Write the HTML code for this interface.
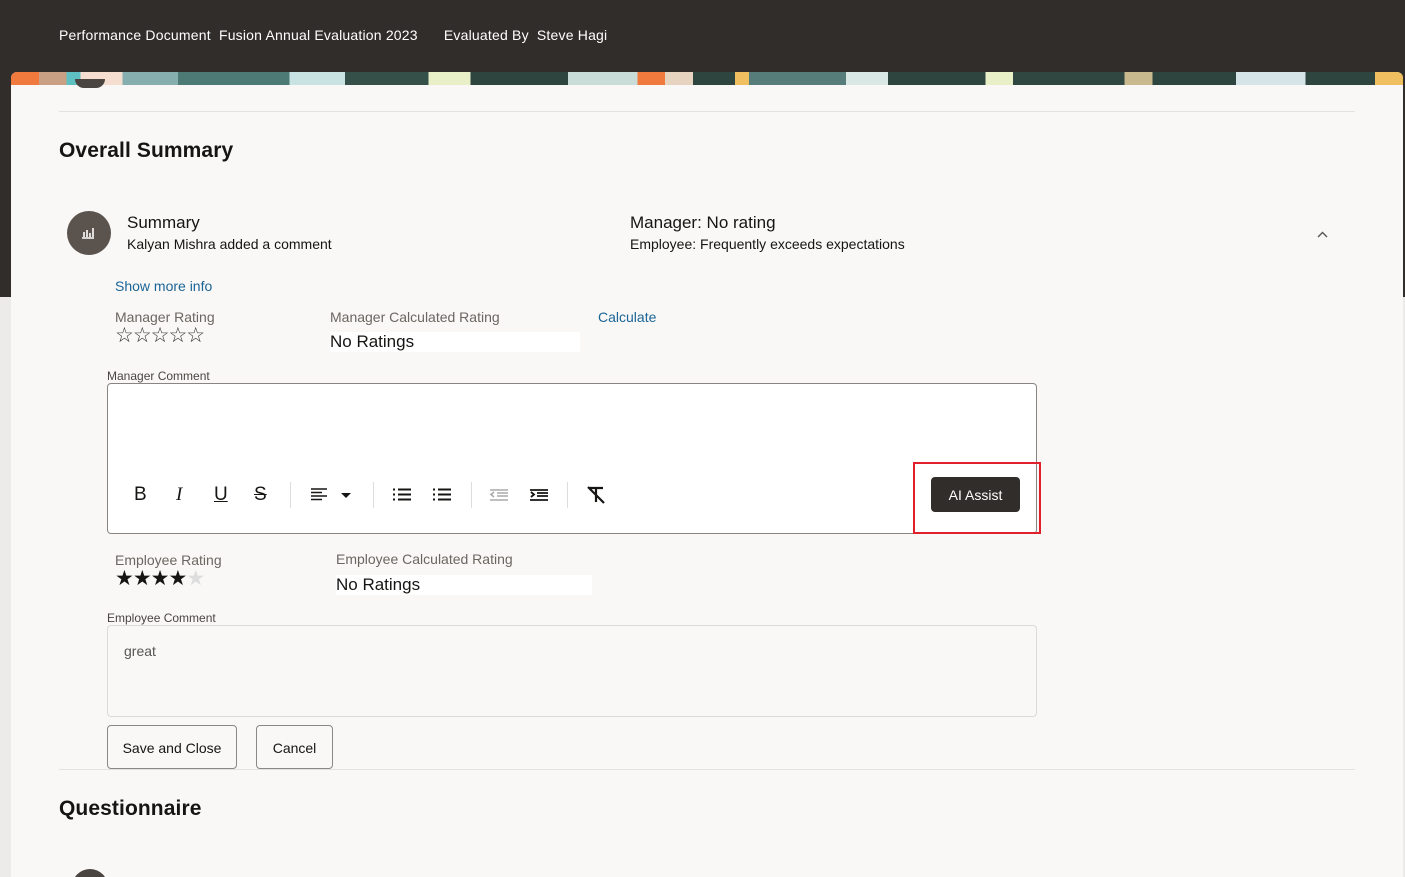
<!DOCTYPE html>
<html><head><meta charset="utf-8"><style>
*{box-sizing:border-box;margin:0;padding:0}
html,body{width:1405px;height:877px;overflow:hidden}
body{background:#ecebe9;font-family:"Liberation Sans",sans-serif;color:#161513;position:relative}
.top{position:absolute;left:0;top:0;width:1405px;height:297px;background:#312d2a}
.hdr{position:absolute;left:59px;top:27px;color:#fff;font-size:14px;letter-spacing:0.2px}
.hdr b{font-weight:normal;margin-left:4px}
.panel{position:absolute;left:11px;top:72px;width:1392px;height:805px;background:#f9f8f6;border-radius:6px 6px 0 0;overflow:hidden}
.banner{height:13px;background:linear-gradient(90deg,#f07a3e 0 2%,#c9a084 2% 4%,#5ec0c0 4% 5%,#f5ddd0 5% 8%,#87aeae 8% 12%,#4e7a76 12% 20%,#c8e3e1 20% 24%,#355049 24% 30%,#e9f0c8 30% 33%,#2d443f 33% 40%,#c9dcd8 40% 45%,#f07a3e 45% 47%,#e7d4c0 47% 49%,#2d443f 49% 52%,#f0c060 52% 53%,#567d7a 53% 60%,#d9e8e5 60% 63%,#2d443f 63% 70%,#e9f0c8 70% 72%,#2f4641 72% 80%,#c9b98e 80% 82%,#2d443f 82% 88%,#d5e4e6 88% 93%,#2d443f 93% 98%,#f0c060 98%)}
.wrap{position:absolute;left:0;top:0;width:1405px;height:877px;overflow:hidden}
.abs{position:absolute}
.line{position:absolute;width:1296px;height:1px;background:#e4e2df}
h2{position:absolute;font-size:21px;font-weight:bold;letter-spacing:0.1px}
.lbl{color:#6b6661;font-size:14px}
.small{font-size:12px;color:#4a4541}
.link{color:#1a6497;font-size:14px}
.btn{position:absolute;border:1px solid #888;border-radius:4px;background:#f9f8f6;font-size:14px;text-align:center}
.ic{position:absolute;top:485px}
.sep{position:absolute;top:482px;width:1px;height:26px;background:#ddd}
.stars{position:absolute;font-size:21px;letter-spacing:-1px;line-height:24px}
</style></head><body>
<div class="top"></div>
<div class="hdr">Performance Document <b>Fusion Annual Evaluation 2023</b> <span style="margin-left:22px">Evaluated By</span> <b>Steve Hagi</b></div>
<div class="panel">
<div class="banner"></div>
<div class="abs" style="left:64px;top:7px;width:30px;height:9px;border-radius:0 0 15px 15px;background:#4a4541"></div>
</div>
<div class="wrap">
<div class="line" style="left:59px;top:111px"></div>
<h2 style="left:59px;top:139px">Overall Summary</h2>
<div class="abs" style="left:67px;top:211px;width:44px;height:44px;border-radius:50%;background:#5a534e"></div>
<svg class="abs" style="left:81px;top:226px" width="14" height="13" viewBox="0 0 14 13"><path d="M1 12h12M3 11V6M6 11V4M9 11V7M12 11V2" stroke="#fff" stroke-width="1.6" fill="none"/></svg>
<div class="abs" style="left:127px;top:213px;font-size:17px">Summary</div>
<div class="abs" style="left:127px;top:236px;font-size:14px">Kalyan Mishra added a comment</div>
<div class="abs" style="left:630px;top:213px;font-size:17px">Manager: No rating</div>
<div class="abs" style="left:630px;top:236px;font-size:14px">Employee: Frequently exceeds expectations</div>
<svg class="abs" style="left:1317px;top:231px" width="11" height="7" viewBox="0 0 11 7"><path d="M1 6l4.5-4.5L10 6" stroke="#555" stroke-width="1.4" fill="none"/></svg>
<div class="abs link" style="left:115px;top:278px">Show more info</div>
<div class="abs lbl" style="left:115px;top:309px">Manager Rating</div>
<div class="stars" style="left:115px;top:324px;color:#333">☆☆☆☆☆</div>
<div class="abs lbl" style="left:330px;top:309px">Manager Calculated Rating</div>
<div class="abs" style="left:330px;top:332px;width:250px;height:20px;background:#fff;font-size:17px">No Ratings</div>
<div class="abs link" style="left:598px;top:309px">Calculate</div>
<div class="abs small" style="left:107px;top:369px">Manager Comment</div>
<div class="abs" style="left:107px;top:383px;width:930px;height:151px;background:#fff;border:1px solid #8a8580;border-radius:4px"></div>
<div class="ic" style="left:134px;top:484px;font-size:19px">B</div>
<div class="ic" style="left:176px;top:484px;font-size:19px;font-style:italic;font-family:'Liberation Serif',serif">I</div>
<div class="ic" style="left:214px;top:484px;font-size:19px;text-decoration:underline">U</div>
<div class="ic" style="left:254px;top:484px;font-size:19px;text-decoration:line-through">S</div>
<div class="sep" style="left:290px"></div>
<svg class="ic" style="left:311px;top:488px" width="42" height="14" viewBox="0 0 42 14"><path d="M0 1h16M0 4.5h11M0 8h16M0 11.5h11" stroke="#161513" stroke-width="1.6"/><path d="M30 5h10l-5 5z" fill="#161513"/></svg>
<div class="sep" style="left:373px"></div>
<svg class="ic" style="left:393px;top:488px" width="18" height="13" viewBox="0 0 18 13"><path d="M0 1.5h2M5 1.5h13M0 6.5h2M5 6.5h13M0 11.5h2M5 11.5h13" stroke="#161513" stroke-width="2"/></svg>
<svg class="ic" style="left:433px;top:488px" width="18" height="13" viewBox="0 0 18 13"><path d="M0 1.5h2M5 1.5h13M0 6.5h2M5 6.5h13M0 11.5h2M5 11.5h13" stroke="#161513" stroke-width="2"/></svg>
<div class="sep" style="left:471px"></div>
<svg class="ic" style="left:490px;top:489px" width="18" height="12" viewBox="0 0 18 12"><path d="M0 1h18M7 4h11M7 7h11M0 11h18M4 3L1 5.5 4 8" stroke="#aaa" stroke-width="1.6" fill="none"/></svg>
<svg class="ic" style="left:530px;top:489px" width="18" height="12" viewBox="0 0 18 12"><path d="M0 1h18M7 4h11M7 7h11M0 11h18M1 3l3 2.5L1 8" stroke="#161513" stroke-width="1.8" fill="none"/></svg>
<div class="sep" style="left:567px"></div>
<svg class="ic" style="left:586px;top:486px" width="20" height="18" viewBox="0 0 20 18"><path d="M3 2h14M10 2v14M2 1l16 16" stroke="#161513" stroke-width="2.2" fill="none"/></svg>
<div class="abs" style="left:913px;top:462px;width:128px;height:72px;border:2px solid #e0202a"></div>
<div class="abs" style="left:931px;top:477px;width:89px;height:35px;background:#312d2a;color:#fff;border-radius:4px;font-size:14px;text-align:center;line-height:37px">AI Assist</div>
<div class="abs lbl" style="left:115px;top:552px">Employee Rating</div>
<div class="stars" style="left:115px;top:567px;color:#161513">★★★★<span style="color:#ddd">★</span></div>
<div class="abs lbl" style="left:336px;top:551px">Employee Calculated Rating</div>
<div class="abs" style="left:336px;top:575px;width:256px;height:20px;background:#fff;font-size:17px">No Ratings</div>
<div class="abs small" style="left:107px;top:611px">Employee Comment</div>
<div class="abs" style="left:107px;top:625px;width:930px;height:92px;border:1px solid #dcdad6;border-radius:4px;padding:17px 16px;font-size:14px;color:#555">great</div>
<div class="btn" style="left:107px;top:725px;width:130px;height:44px;line-height:44px">Save and Close</div>
<div class="btn" style="left:256px;top:725px;width:77px;height:44px;line-height:44px">Cancel</div>
<div class="line" style="left:59px;top:769px"></div>
<h2 style="left:59px;top:797px">Questionnaire</h2>
<div class="abs" style="left:72px;top:869px;width:36px;height:36px;border-radius:50%;background:#4a4541"></div>
</div>
</body></html>
